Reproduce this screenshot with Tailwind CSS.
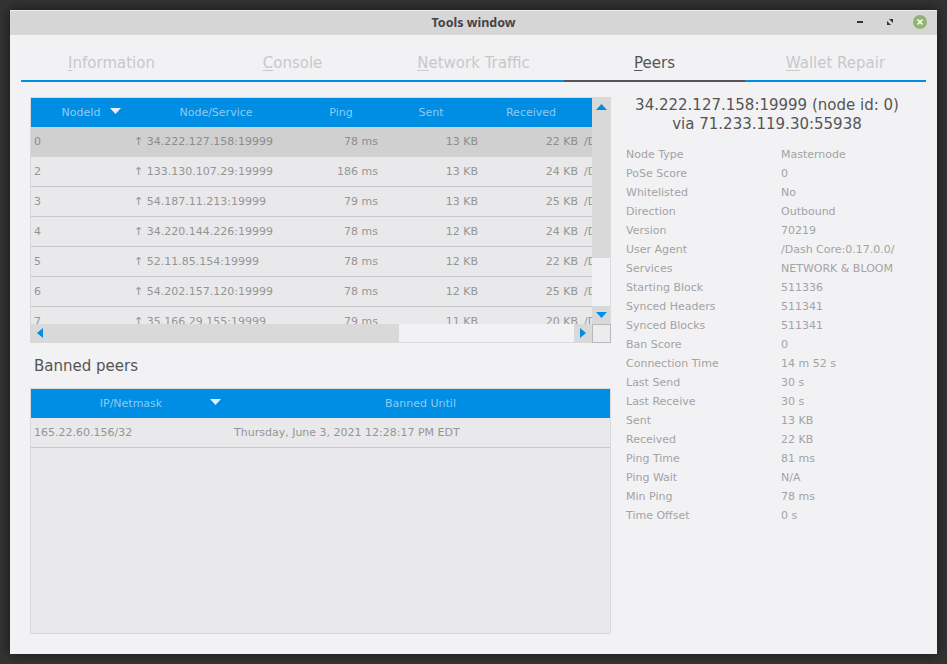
<!DOCTYPE html>
<html lang="en">
<head>
    <meta charset="UTF-8">
    <title>Tools window</title>
    <script src="https://cdn.jsdelivr.net/npm/@tailwindcss/browser@4"></script>
</head>
<body class="w-[947px] h-[664px] overflow-hidden bg-[#333333] p-[10px] font-['DejaVu_Sans',sans-serif]">
<div class="h-[644px] w-[927px] flex flex-col bg-[#f2f2f4] shadow-[0_0_12px_rgba(0,0,0,0.6)]">

    <!-- title bar -->
    <div class="h-[25px] shrink-0 bg-[#d6d6d6] border-t border-[#eeeeee] flex items-center justify-center relative">
        <span class="font-['Noto_Sans',sans-serif] text-[12.5px] font-bold text-[#444444]">Tools window</span>
        <div class="absolute right-[10px] top-[4px] flex items-center gap-[16px]">
            <svg width="14" height="14" viewBox="0 0 14 14"><rect x="4" y="6" width="6" height="2" fill="#333"/></svg>
            <svg width="14" height="14" viewBox="0 0 14 14"><path d="M6 4h4v4zM4 6v4h4z" fill="#333"/></svg>
            <svg width="14" height="14" viewBox="0 0 14 14"><circle cx="7" cy="7" r="7" fill="#92b372"/><path d="M4.500 4.500l5 5M9.500 4.500l-5 5" stroke="#fff" stroke-width="1.600"/></svg>
        </div>
    </div>

    <!-- tabs -->
    <div class="mx-[11px] mt-[11px] h-[36px] shrink-0 flex text-[15px] text-[#c8c8ca] border-b-2 border-[#008de4]">
        <div class="w-[181px] flex justify-center pt-[6px] h-[36px]"><span><u class="underline-offset-2">I</u>nformation</span></div>
        <div class="w-[181px] flex justify-center pt-[6px] h-[36px]"><span><u class="underline-offset-2">C</u>onsole</span></div>
        <div class="w-[181px] flex justify-center pt-[6px] h-[36px]"><span><u class="underline-offset-2">N</u>etwork Traffic</span></div>
        <div class="w-[181px] flex justify-center pt-[6px] h-[36px] text-[#555555] border-b-2 border-[#555555]"><span><u class="underline-offset-2">P</u>eers</span></div>
        <div class="w-[181px] flex justify-center pt-[6px] h-[36px]"><span><u class="underline-offset-2">W</u>allet Repair</span></div>
    </div>

    <div class="flex mt-[15px] ml-[20px]">
        <!-- left column -->
        <div class="w-[581px] shrink-0">
            <div class="h-[246px] border border-[#d9d9d9] relative text-[11px] text-[#959595] whitespace-nowrap">
                <div class="h-[226px] w-[561px] overflow-hidden">
                    <div class="h-[29px] pt-[2px] flex items-center bg-[#008de4] text-[#8fcbf2]">
                        <div class="w-[100px] shrink-0 relative text-center">NodeId<svg class="absolute left-[79px] top-[3px]" width="11" height="7" viewBox="0 0 11 7"><path d="M0 0h11l-5.500 6z" fill="#e4eef6"/></svg></div>
                        <div class="w-[170px] shrink-0 text-center">Node/Service</div>
                        <div class="w-[80px] shrink-0 text-center">Ping</div>
                        <div class="w-[100px] shrink-0 text-center">Sent</div>
                        <div class="w-[100px] shrink-0 text-center">Received</div>
                    </div>
                    <div class="h-[30px] flex items-center bg-[#d0d0d0] text-[#8c8c8c]">
                        <div class="w-[100px] shrink-0 pl-[3px]">0</div><div class="w-[170px] shrink-0 pl-[3px]">↑ 34.222.127.158:19999</div><div class="w-[80px] shrink-0 pr-[3px] text-right">78 ms</div><div class="w-[100px] shrink-0 pr-[3px] text-right">13 KB</div><div class="w-[100px] shrink-0 pr-[3px] text-right">22 KB</div><div class="pl-[3px]">/Dash</div>
                    </div>
                    <div class="h-[30px] pt-[1px] flex items-center bg-[#e9e9eb] border-b border-[#c8c8c8]">
                        <div class="w-[100px] shrink-0 pl-[3px]">2</div><div class="w-[170px] shrink-0 pl-[3px]">↑ 133.130.107.29:19999</div><div class="w-[80px] shrink-0 pr-[3px] text-right">186 ms</div><div class="w-[100px] shrink-0 pr-[3px] text-right">13 KB</div><div class="w-[100px] shrink-0 pr-[3px] text-right">24 KB</div><div class="pl-[3px]">/Dash</div>
                    </div>
                    <div class="h-[30px] pt-[1px] flex items-center bg-[#e9e9eb] border-b border-[#c8c8c8]">
                        <div class="w-[100px] shrink-0 pl-[3px]">3</div><div class="w-[170px] shrink-0 pl-[3px]">↑ 54.187.11.213:19999</div><div class="w-[80px] shrink-0 pr-[3px] text-right">79 ms</div><div class="w-[100px] shrink-0 pr-[3px] text-right">13 KB</div><div class="w-[100px] shrink-0 pr-[3px] text-right">25 KB</div><div class="pl-[3px]">/Dash</div>
                    </div>
                    <div class="h-[30px] pt-[1px] flex items-center bg-[#e9e9eb] border-b border-[#c8c8c8]">
                        <div class="w-[100px] shrink-0 pl-[3px]">4</div><div class="w-[170px] shrink-0 pl-[3px]">↑ 34.220.144.226:19999</div><div class="w-[80px] shrink-0 pr-[3px] text-right">78 ms</div><div class="w-[100px] shrink-0 pr-[3px] text-right">12 KB</div><div class="w-[100px] shrink-0 pr-[3px] text-right">24 KB</div><div class="pl-[3px]">/Dash</div>
                    </div>
                    <div class="h-[30px] pt-[1px] flex items-center bg-[#e9e9eb] border-b border-[#c8c8c8]">
                        <div class="w-[100px] shrink-0 pl-[3px]">5</div><div class="w-[170px] shrink-0 pl-[3px]">↑ 52.11.85.154:19999</div><div class="w-[80px] shrink-0 pr-[3px] text-right">78 ms</div><div class="w-[100px] shrink-0 pr-[3px] text-right">12 KB</div><div class="w-[100px] shrink-0 pr-[3px] text-right">22 KB</div><div class="pl-[3px]">/Dash</div>
                    </div>
                    <div class="h-[30px] pt-[1px] flex items-center bg-[#e9e9eb] border-b border-[#c8c8c8]">
                        <div class="w-[100px] shrink-0 pl-[3px]">6</div><div class="w-[170px] shrink-0 pl-[3px]">↑ 54.202.157.120:19999</div><div class="w-[80px] shrink-0 pr-[3px] text-right">78 ms</div><div class="w-[100px] shrink-0 pr-[3px] text-right">12 KB</div><div class="w-[100px] shrink-0 pr-[3px] text-right">25 KB</div><div class="pl-[3px]">/Dash</div>
                    </div>
                    <div class="h-[30px] pt-[1px] flex items-center bg-[#e9e9eb] border-b border-[#c8c8c8]">
                        <div class="w-[100px] shrink-0 pl-[3px]">7</div><div class="w-[170px] shrink-0 pl-[3px]">↑ 35.166.29.155:19999</div><div class="w-[80px] shrink-0 pr-[3px] text-right">79 ms</div><div class="w-[100px] shrink-0 pr-[3px] text-right">11 KB</div><div class="w-[100px] shrink-0 pr-[3px] text-right">20 KB</div><div class="pl-[3px]">/Dash</div>
                    </div>
                </div>
                <!-- scrollbars sit over the table -->
                <div class="absolute -right-px -top-px w-[19px] h-[227px] bg-[#d9d9d9] flex flex-col items-center pt-[7px]">
                    <svg class="-ml-px" width="11" height="6" viewBox="0 0 11 6"><path d="M0 6h11l-5.500-6z" fill="#008de4"/></svg>
                    <div class="-ml-px w-[18px] h-[48px] mt-[148px] bg-[#f2f2f4]"></div>
                    <svg class="-ml-px mt-[6px]" width="11" height="6" viewBox="0 0 11 6"><path d="M0 0h11l-5.500 6z" fill="#008de4"/></svg>
                </div>
                <div class="absolute -left-px -bottom-px w-[562px] h-[19px] bg-[#d9d9d9] border-b border-[#d9d9d9] flex items-center">
                    <svg class="ml-[7px]" width="6" height="10" viewBox="0 0 6 10"><path d="M6 0v10l-6-5z" fill="#008de4"/></svg>
                    <div class="ml-[356px] w-[175px] h-[18px] bg-[#f2f2f4]"></div>
                    <svg class="ml-[6px]" width="6" height="10" viewBox="0 0 6 10"><path d="M0 0v10l6-5z" fill="#008de4"/></svg>
                </div>
                <div class="absolute -right-px -bottom-px w-[19px] h-[19px] bg-[#ececee] border border-[#b9b9b9]"></div>
            </div>

            <div class="mt-[15px] ml-[4px] text-[15px] leading-[17px] text-[#555555]">Banned peers</div>

            <div class="mt-[13px] h-[246px] border border-[#d9d9d9] bg-[#e9e9eb] text-[11px] text-[#959595]">
                <div class="h-[29px] pt-[2px] flex items-center bg-[#008de4] text-[#8fcbf2]">
                    <div class="w-[200px] relative text-center">IP/Netmask<svg class="absolute left-[179px] top-[3px]" width="11" height="7" viewBox="0 0 11 7"><path d="M0 0h11l-5.500 6z" fill="#e4eef6"/></svg></div>
                    <div class="w-[379px] text-center">Banned Until</div>
                </div>
                <div class="h-[30px] pt-[1px] flex items-center border-b border-[#c8c8c8]">
                    <div class="w-[200px] pl-[3px]">165.22.60.156/32</div>
                    <div class="pl-[3px]">Thursday, June 3, 2021 12:28:17 PM EDT</div>
                </div>
            </div>
        </div>

        <!-- peer details -->
        <div class="ml-[15px] w-[300px]">
            <div class="-mt-px text-center text-[15px] leading-[19px] text-[#555555] w-[282px] whitespace-nowrap">34.222.127.158:19999 (node id: 0)<br>via 71.233.119.30:55938</div>
            <div class="mt-[12px] grid grid-cols-[155px_1fr] auto-rows-[19px] items-center text-[11px] text-[#a3a3a3]">
                <div>Node Type</div><div>Masternode</div>
                <div>PoSe Score</div><div>0</div>
                <div>Whitelisted</div><div>No</div>
                <div>Direction</div><div>Outbound</div>
                <div>Version</div><div>70219</div>
                <div>User Agent</div><div>/Dash Core:0.17.0.0/</div>
                <div>Services</div><div>NETWORK &amp; BLOOM</div>
                <div>Starting Block</div><div>511336</div>
                <div>Synced Headers</div><div>511341</div>
                <div>Synced Blocks</div><div>511341</div>
                <div>Ban Score</div><div>0</div>
                <div>Connection Time</div><div>14 m 52 s</div>
                <div>Last Send</div><div>30 s</div>
                <div>Last Receive</div><div>30 s</div>
                <div>Sent</div><div>13 KB</div>
                <div>Received</div><div>22 KB</div>
                <div>Ping Time</div><div>81 ms</div>
                <div>Ping Wait</div><div>N/A</div>
                <div>Min Ping</div><div>78 ms</div>
                <div>Time Offset</div><div>0 s</div>
            </div>
        </div>
    </div>
</div>
</body>
</html>
